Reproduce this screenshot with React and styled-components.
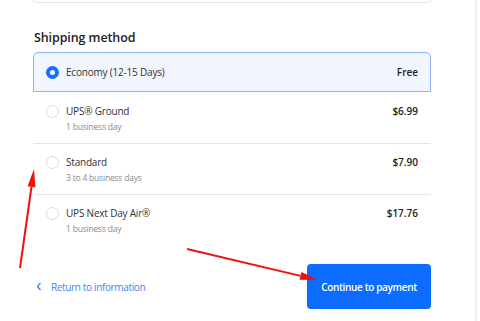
import React from 'react';
import styled, { createGlobalStyle } from 'styled-components';

const methods = [
  { name: 'Economy (12-15 Days)', price: 'Free' },
  { name: 'UPS® Ground', note: '1 business day', price: '$6.99' },
  { name: 'Standard', note: '3 to 4 business days', price: '$7.90' },
  { name: 'UPS Next Day Air®', note: '1 business day', price: '$17.76' },
];

const GlobalStyle = createGlobalStyle`
  body {
    margin: 0;
    background: #fff;
    font-family: "Open Sans", "Noto Sans", sans-serif;
    color: #333;
  }
`;

const Page = styled.div`
  position: relative;
  width: 480px;
  height: 321px;
  overflow: hidden;
`;

const Main = styled.div`
  width: 398px;
  height: 321px;
  padding: 0 44px 0 33px;
  border-right: 2px solid #efefef;
`;

const PrevCard = styled.div`
  height: 2px;
  border: 1px solid #e6e6e6;
  border-top: none;
  border-radius: 0 0 5px 5px;
`;

const Heading = styled.h2`
  margin: 26px 0 6px 1px;
  font-size: 12.5px;
  font-weight: 600;
  color: #222;
  letter-spacing: -0.1px;
`;

const OptionList = styled.div`
  border: 1px solid #e3e3e3;
  border-radius: 5px;
`;

const Option = styled.div`
  position: relative;
  display: flex;
  align-items: flex-start;
  padding: ${(p) => (p.$active ? '12px 12px' : '11px 12px 10px')};
  height: ${(p) => (p.$active ? '40px' : '51px')};
  box-sizing: border-box;
  background: ${(p) => (p.$active ? '#f1f5fe' : '#fff')};
  border: 1px solid ${(p) => (p.$active ? '#8fb4f3' : 'transparent')};
  border-top-color: ${(p) => (p.$active ? '#8fb4f3' : '#e6e6e6')};
  margin: ${(p) => (p.$active ? '-1px -1px 0' : '0 -1px')};
  border-radius: ${(p) => (p.$active ? '5px 5px 0 0' : '0')};
  &:nth-child(2) {
    border-top-color: transparent;
  }
  &:last-child {
    margin-bottom: -1px;
    border-bottom-color: transparent;
  }
`;

const Radio = styled.span`
  flex: none;
  width: 13px;
  height: 13px;
  box-sizing: border-box;
  border-radius: 50%;
  margin-top: 1px;
  margin-right: 7px;
  border: ${(p) => (p.$checked ? '4px solid #1a6ff5' : '1px solid #dcdcdc')};
  background: #fff;
`;

const Info = styled.div`
  flex: 1;
  display: flex;
  flex-direction: column;
  gap: 3px;
`;

const Name = styled.span`
  font-size: 10px;
  line-height: 14px;
  color: #333;
  letter-spacing: -0.2px;
`;

const Note = styled.span`
  font-size: 8.5px;
  line-height: 11px;
  color: #8a8a8a;
  letter-spacing: -0.2px;
`;

const Price = styled.span`
  font-size: 10px;
  line-height: 14px;
  font-weight: 600;
  color: #222;
`;

const Footer = styled.div`
  display: flex;
  align-items: center;
  justify-content: space-between;
  margin-top: 19px;
`;

const BackLink = styled.a`
  display: flex;
  align-items: center;
  gap: 9px;
  margin-left: 3px;
  font-size: 10px;
  color: #3f86f5;
  text-decoration: none;
  letter-spacing: -0.35px;
`;

const Button = styled.button`
  width: 124px;
  height: 45px;
  border: none;
  border-radius: 4px;
  background: #0b6cff;
  color: #fff;
  font-family: inherit;
  font-size: 10px;
  font-weight: 600;
  letter-spacing: -0.35px;
`;

const Annotations = styled.svg`
  position: absolute;
  left: 0;
  top: 0;
  pointer-events: none;
`;

const Arrow = ({ x1, y1, x2, y2 }) => {
  const a = Math.atan2(y2 - y1, x2 - x1);
  const len = 18;
  const w = 4;
  const bx = x2 - len * Math.cos(a);
  const by = y2 - len * Math.sin(a);
  const px = -Math.sin(a) * w;
  const py = Math.cos(a) * w;
  return (
    <g>
      <line x1={x1} y1={y1} x2={bx} y2={by} stroke="#f01010" strokeWidth="2" />
      <polygon
        points={`${x2},${y2} ${bx + px},${by + py} ${bx - px},${by - py}`}
        fill="#f01010"
      />
    </g>
  );
};

const App = () => {
  return (
    <Page>
      <GlobalStyle />
      <Main>
        <PrevCard />
        <Heading>Shipping method</Heading>
        <OptionList>
          {methods.map((m, i) => (
            <Option key={m.name} $active={i === 0}>
              <Radio $checked={i === 0} />
              <Info>
                <Name>{m.name}</Name>
                {m.note && <Note>{m.note}</Note>}
              </Info>
              <Price>{m.price}</Price>
            </Option>
          ))}
        </OptionList>
        <Footer>
          <BackLink href="#">
            <svg width="6" height="9" viewBox="0 0 6 9">
              <path d="M4.5 1 L1.5 4.5 L4.5 8" fill="none" stroke="#3f86f5" strokeWidth="1.3" />
            </svg>
            Return to information
          </BackLink>
          <Button>Continue to payment</Button>
        </Footer>
      </Main>
      <Annotations width="480" height="321">
        <Arrow x1={20} y1={268} x2={34} y2={169} />
        <Arrow x1={187} y1={249} x2={318} y2={280} />
      </Annotations>
    </Page>
  );
};

export default App;
